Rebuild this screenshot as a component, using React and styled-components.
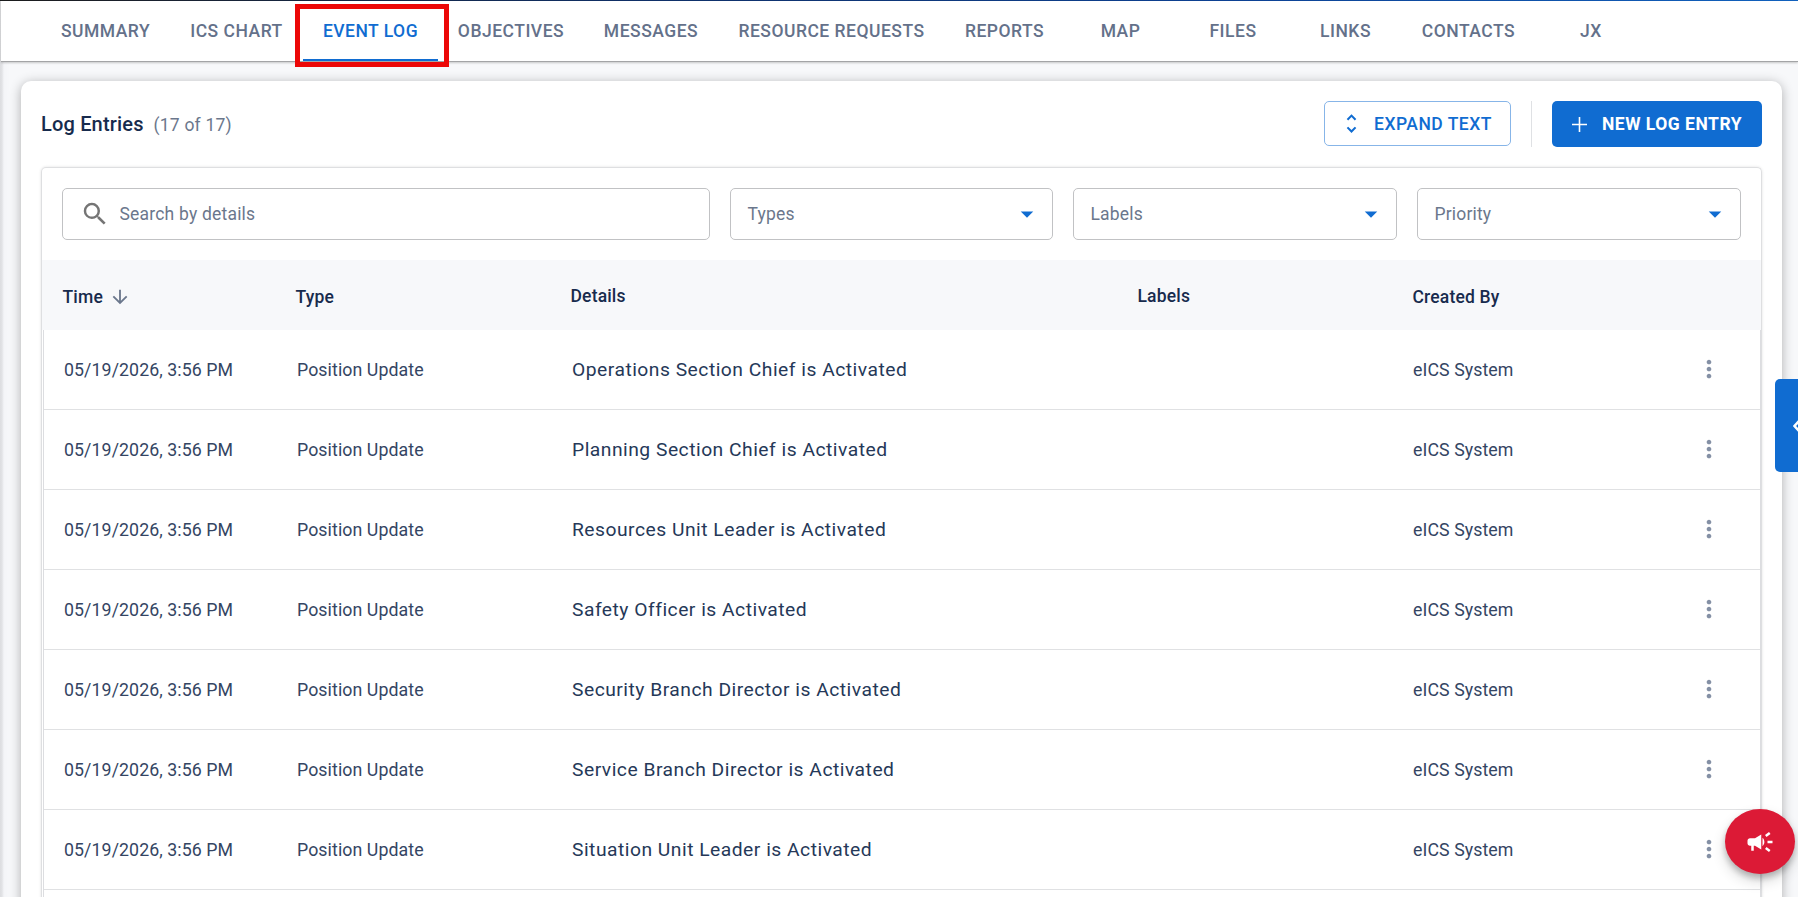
import React, { useState } from 'react';
import styled, { createGlobalStyle } from 'styled-components';
import {
  MdSearch,
  MdArrowDropDown,
  MdArrowDownward,
  MdUnfoldMore,
  MdMoreVert,
  MdCampaign,
} from 'react-icons/md';

const GlobalStyle = createGlobalStyle`
  * {
    box-sizing: border-box;
  }
  body {
    margin: 0;
    overflow: hidden;
    font-family: Roboto, sans-serif;
    letter-spacing: 0.17px;
    color: #172b4d;
    background: #f7f8fa;
  }
  button, input {
    font-family: inherit;
    letter-spacing: inherit;
  }
`;

const Page = styled.div`
  height: 897px;
  overflow: hidden;
  border-top: 1px solid #0d47a1;
  border-image: linear-gradient(90deg, #1c1c1c, #0f2f66 35%, #0c4295 70%, #1161bd) 1;
  background: linear-gradient(90deg, #dcdde0, #e2e3e6 2px, #f4f5f8 4px, #f7f8fa 10px);
`;

const NavBar = styled.nav`
  display: flex;
  position: relative;
  height: 61px;
  padding-left: 40px;
  margin-left: 1px;
  background: #fff;
  border-bottom: 1px solid #a3a4a6;
  box-shadow: 0 1px 2px rgba(0, 0, 0, 0.2);
`;

const Tab = styled.button`
  position: relative;
  height: 60px;
  width: ${(props) => props.$width}px;
  padding: 0;
  border: none;
  border-bottom: 2px solid ${(props) => (props.$active ? '#106cd1' : 'transparent')};
  background: none;
  color: ${(props) => (props.$active ? '#106cd1' : '#64718a')};
  font-size: 17.5px;
  font-weight: 500;
  letter-spacing: 0.5px;
  line-height: 60px;
  white-space: nowrap;
`;

const Highlight = styled.span`
  position: absolute;
  top: 3px;
  left: -8px;
  width: 154px;
  height: 63px;
  border: 5px solid #ec0707;
  z-index: 3;
  pointer-events: none;
`;

const Card = styled.main`
  width: 1761px;
  height: 900px;
  margin: 19px 0 0 21px;
  padding: 20px 20px 0;
  border-radius: 10px;
  background: #fff;
  box-shadow: 0 2px 12px rgba(0, 0, 0, 0.3);
`;

const TitleBar = styled.header`
  display: flex;
  align-items: center;
  height: 46px;
`;

const Title = styled.h1`
  margin: 0;
  font-size: 20px;
  font-weight: 500;
  line-height: 28px;
`;

const Count = styled.span`
  flex: 1;
  margin-left: 10px;
  padding-top: 1px;
  font-size: 17.5px;
  line-height: 28px;
  letter-spacing: 0.2px;
  color: #6b778c;
`;

const ExpandButton = styled.button`
  display: flex;
  align-items: center;
  width: 187px;
  height: 45px;
  margin-bottom: 1px;
  padding: 0 0 0 14px;
  border: 1px solid #87b5e8;
  border-radius: 5px;
  background: #fff;
  color: #106cd1;
  font-size: 17.5px;
  font-weight: 500;
  letter-spacing: 0.5px;
  white-space: nowrap;
  svg {
    margin-right: 10px;
  }
`;

const Divider = styled.span`
  width: 1px;
  height: 46px;
  margin: 0 20px;
  background: #dfe1e4;
`;

const NewButton = styled.button`
  display: flex;
  align-items: center;
  width: 210px;
  height: 46px;
  padding: 0 0 0 20px;
  border: none;
  border-radius: 5px;
  background: #106cd1;
  color: #fff;
  font-size: 17.5px;
  font-weight: 700;
  letter-spacing: 0.5px;
  white-space: nowrap;
  svg {
    margin-right: 15px;
  }
`;

const Panel = styled.section`
  margin-top: 20px;
  border: 1px solid #dedfe1;
  border-bottom: none;
  border-radius: 5px 5px 0 0;
  box-shadow: 0 0 3px rgba(0, 0, 0, 0.12);
`;

const Filters = styled.div`
  display: grid;
  grid-template-columns: 648px 323px 324px 324px;
  gap: 20px;
  padding: 20px;
  height: 92px;
`;

const Field = styled.label`
  display: flex;
  align-items: center;
  height: 52px;
  padding: 0 10px 0 ${(props) => (props.$search ? 17 : 16.5)}px;
  border: 1px solid #c1c2c4;
  border-radius: 5px;
  color: #6b778c;
  font-size: 17.5px;
`;

const SearchInput = styled.input`
  flex: 1;
  margin-left: 9.5px;
  padding: 0;
  border: none;
  outline: none;
  background: none;
  font-size: 17.5px;
  letter-spacing: 0.2px;
  &::placeholder {
    color: #6b778c;
    opacity: 1;
  }
`;

const FieldText = styled.span`
  flex: 1;
`;

const columns = '233px 275px 567px 275px 1fr';

const TableHead = styled.div`
  display: grid;
  grid-template-columns: ${columns};
  height: 70px;
  padding-left: 20.5px;
  align-items: center;
  background: #f7f8fa;
  font-size: 17.5px;
  font-weight: 500;
`;

const HeadCell = styled.span`
  display: flex;
  align-items: center;
  padding-top: ${(props) => (props.$raised ? 1 : 3)}px;
  svg {
    margin-left: 6px;
  }
`;

const Rows = styled.div`
  margin: 0 0 0 1px;
  border-left: 1px solid #dcdde0;
  border-right: 1px solid #dcdde0;
`;

const Row = styled.div`
  display: grid;
  grid-template-columns: ${columns};
  align-items: center;
  height: 80px;
  padding-left: 20px;
  border-bottom: 1px solid #e0e1e3;
  font-size: 17.75px;
  letter-spacing: 0.08px;
  color: #344563;
`;

const Details = styled.span`
  font-size: 19.25px;
  letter-spacing: 0.5px;
  color: #253858;
`;

const Cell = styled.span`
  white-space: nowrap;
`;

const CreatedCell = styled.div`
  display: flex;
  align-items: center;
  justify-content: space-between;
  margin-left: -1px;
  padding-right: 37px;
  svg {
    margin-bottom: 1px;
    color: #8490a5;
  }
`;

const SideTab = styled.button`
  position: fixed;
  right: 0;
  top: 379px;
  display: flex;
  align-items: center;
  justify-content: flex-end;
  width: 23px;
  height: 93px;
  padding: 0;
  border: none;
  border-radius: 5px 0 0 5px;
  background: #106cd1;
  color: #fff;
`;

const Fab = styled.button`
  position: fixed;
  left: 1725px;
  top: 809px;
  display: flex;
  align-items: center;
  justify-content: center;
  width: 70px;
  height: 65px;
  padding: 0;
  border: none;
  border-radius: 50%;
  background: #dc1a36;
  color: #fff;
  box-shadow: 0 4px 6px rgba(0, 0, 0, 0.22), 0 7px 14px rgba(0, 0, 0, 0.16);
`;

const PlusIcon = () => (
  <svg width="15" height="15" viewBox="0 0 15 15" fill="none" stroke="currentColor" strokeWidth="1.6">
    <path d="M7.5 0v15M0 7.5h15" />
  </svg>
);

// only the tip of the arrow is inside the window
const ChevronTip = () => (
  <svg width="5" height="12" viewBox="0 0 5 12" fill="none" stroke="currentColor" strokeWidth="2.4">
    <path d="M6.5 0.5L1.5 6l5 5.5" />
  </svg>
);

const tabs = [
  { name: 'SUMMARY', width: 129 },
  { name: 'ICS CHART', width: 133 },
  { name: 'EVENT LOG', width: 135 },
  { name: 'OBJECTIVES', width: 146 },
  { name: 'MESSAGES', width: 134 },
  { name: 'RESOURCE REQUESTS', width: 227 },
  { name: 'REPORTS', width: 119 },
  { name: 'MAP', width: 113 },
  { name: 'FILES', width: 112 },
  { name: 'LINKS', width: 113 },
  { name: 'CONTACTS', width: 133 },
  { name: 'JX', width: 112 },
];

const entries = [
  'Operations Section Chief',
  'Planning Section Chief',
  'Resources Unit Leader',
  'Safety Officer',
  'Security Branch Director',
  'Service Branch Director',
  'Situation Unit Leader',
];

const App = () => {
  const [active, setActive] = useState('EVENT LOG');
  const [search, setSearch] = useState('');

  return (
    <Page>
      <GlobalStyle />
      <NavBar>
        {tabs.map((tab) => (
          <Tab
            key={tab.name}
            $width={tab.width}
            $active={tab.name === active}
            onClick={() => setActive(tab.name)}
          >
            {tab.name}
            {tab.name === 'EVENT LOG' && <Highlight />}
          </Tab>
        ))}
      </NavBar>
      <Card>
        <TitleBar>
          <Title>Log Entries</Title>
          <Count>(17 of 17)</Count>
          <ExpandButton>
            <MdUnfoldMore size={25} />
            EXPAND TEXT
          </ExpandButton>
          <Divider />
          <NewButton>
            <PlusIcon />
            NEW LOG ENTRY
          </NewButton>
        </TitleBar>
        <Panel>
          <Filters>
            <Field $search>
              <MdSearch size={30} color="#757575" />
              <SearchInput
                placeholder="Search by details"
                value={search}
                onChange={(e) => setSearch(e.target.value)}
              />
            </Field>
            {['Types', 'Labels', 'Priority'].map((name) => (
              <Field key={name}>
                <FieldText>{name}</FieldText>
                <MdArrowDropDown size={30} color="#106cd1" />
              </Field>
            ))}
          </Filters>
          <TableHead>
            <HeadCell>
              Time
              <MdArrowDownward size={22} color="#6b778c" />
            </HeadCell>
            <HeadCell>Type</HeadCell>
            <HeadCell $raised>Details</HeadCell>
            <HeadCell $raised>Labels</HeadCell>
            <HeadCell>Created By</HeadCell>
          </TableHead>
          <Rows>
            {entries.map((entry) => (
              <Row key={entry}>
                <Cell>05/19/2026, 3:56 PM</Cell>
                <Cell>Position Update</Cell>
                <Details>{entry} is Activated</Details>
                <span />
                <CreatedCell>
                  <Cell>eICS System</Cell>
                  <MdMoreVert size={28} />
                </CreatedCell>
              </Row>
            ))}
            <Row />
          </Rows>
        </Panel>
      </Card>
      <SideTab>
        <ChevronTip />
      </SideTab>
      <Fab>
        <MdCampaign size={30} />
      </Fab>
    </Page>
  );
};

export default App;
